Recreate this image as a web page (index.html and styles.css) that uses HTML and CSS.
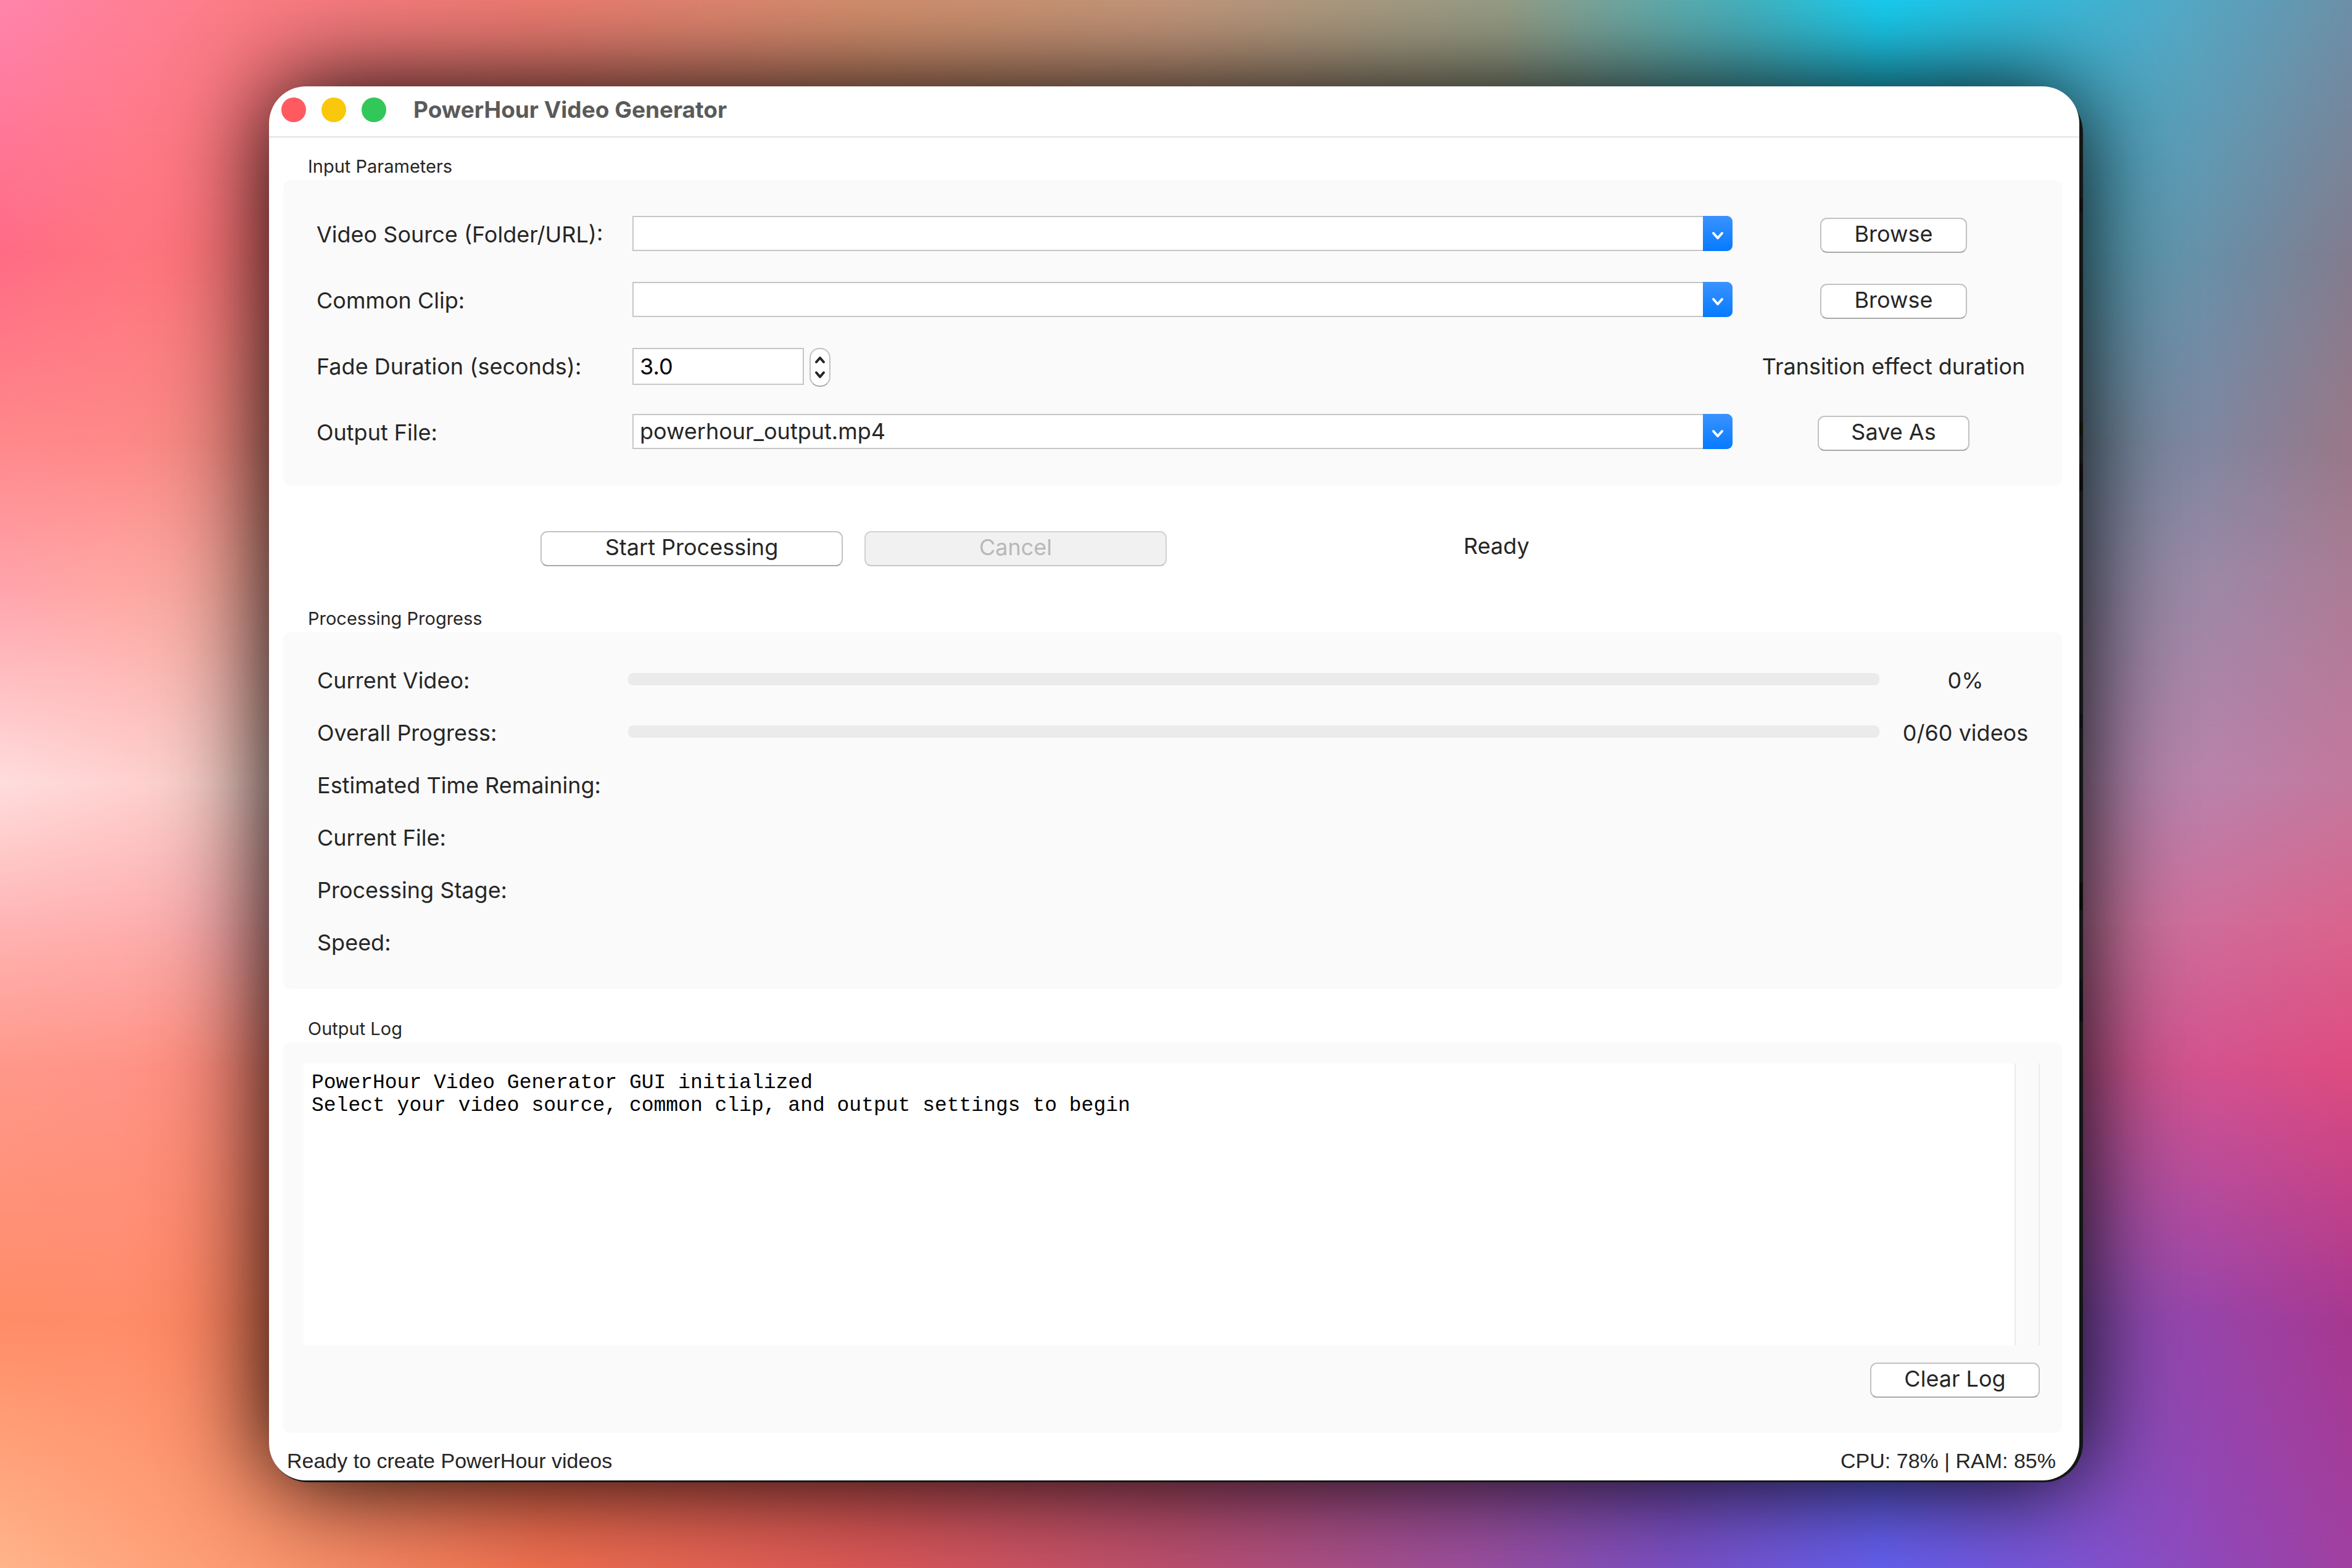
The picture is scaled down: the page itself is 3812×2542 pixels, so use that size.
FILE: index.html
```html
<!DOCTYPE html>
<html lang="en">
<head>
<meta charset="utf-8">
<title>PowerHour Video Generator</title>
<link rel="stylesheet" href="styles.css">
</head>
<body>
<div class="wallpaper" aria-hidden="true">
  <div class="band band-1"></div>
  <div class="band band-2"></div>
  <div class="band band-3"></div>
  <div class="band band-4"></div>
  <div class="band band-5"></div>
  <div class="band band-6"></div>
  <div class="band band-7"></div>
  <div class="band band-8"></div>
  <div class="band band-9"></div>
</div>
<div class="desktop">
  <div class="back-window">
    <main class="window">
      <header class="titlebar">
        <div class="lights">
          <button class="light light-close" type="button" aria-label="Close"></button>
          <button class="light light-minimize" type="button" aria-label="Minimize"></button>
          <button class="light light-zoom" type="button" aria-label="Zoom"></button>
        </div>
        <h1 class="window-title">PowerHour Video Generator</h1>
      </header>

      <div class="content">
        <section class="group">
          <h2 class="group-title">Input Parameters</h2>
          <div class="panel inputs">
            <label for="source">Video Source (Folder/URL):</label>
            <div class="combo">
              <input id="source" class="field" type="text">
              <button class="combo-arrow" type="button" aria-label="Show video sources"><svg viewBox="0 0 20 14"><path d="M3 3l7 8 7-8"/></svg></button>
            </div>
            <button class="button browse" type="button">Browse</button>

            <label for="clip">Common Clip:</label>
            <div class="combo">
              <input id="clip" class="field" type="text">
              <button class="combo-arrow" type="button" aria-label="Show common clips"><svg viewBox="0 0 20 14"><path d="M3 3l7 8 7-8"/></svg></button>
            </div>
            <button class="button browse" type="button">Browse</button>

            <label for="fade">Fade Duration (seconds):</label>
            <div class="spin">
              <input id="fade" class="field spin-field" type="text" inputmode="decimal" value="3.0">
              <div class="stepper">
                <button class="step" type="button" aria-label="Increase"><svg viewBox="0 0 20 14"><path d="M4 11l6-7 6 7"/></svg></button>
                <button class="step" type="button" aria-label="Decrease"><svg viewBox="0 0 20 14"><path d="M4 3l6 7 6-7"/></svg></button>
              </div>
            </div>
            <span class="hint">Transition effect duration</span>

            <label for="output">Output File:</label>
            <div class="combo">
              <input id="output" class="field" type="text" value="powerhour_output.mp4">
              <button class="combo-arrow" type="button" aria-label="Show output files"><svg viewBox="0 0 20 14"><path d="M3 3l7 8 7-8"/></svg></button>
            </div>
            <button class="button save" type="button">Save As</button>
          </div>
        </section>

        <div class="controls">
          <button class="button action" type="button">Start Processing</button>
          <button class="button action" type="button" disabled>Cancel</button>
          <span class="state">Ready</span>
        </div>

        <section class="group">
          <h2 class="group-title">Processing Progress</h2>
          <div class="panel progress">
            <label for="current">Current Video:</label>
            <progress id="current" class="bar" value="0" max="100"></progress>
            <span class="amount">0%</span>
            <label for="overall">Overall Progress:</label>
            <progress id="overall" class="bar" value="0" max="60"></progress>
            <span class="amount">0/60 videos</span>
            <span class="wide">Estimated Time Remaining:</span>
            <span class="wide">Current File:</span>
            <span class="wide">Processing Stage:</span>
            <span class="wide">Speed:</span>
          </div>
        </section>

        <section class="group group-log">
          <h2 class="group-title" id="log-title">Output Log</h2>
          <div class="panel log-panel">
            <div class="log-row">
              <textarea class="log" readonly aria-labelledby="log-title">PowerHour Video Generator GUI initialized
Select your video source, common clip, and output settings to begin</textarea>
              <div class="track"></div>
            </div>
            <button class="button clear" type="button">Clear Log</button>
          </div>
        </section>
      </div>

      <footer class="statusbar">
        <span>Ready to create PowerHour videos</span>
        <span>CPU: 78% | RAM: 85%</span>
      </footer>
    </main>
  </div>
</div>
</body>
</html>
```
FILE: styles.css
```css
* {
  box-sizing: border-box;
}

body {
  margin: 0;
  color: #262626;
  font-family: Inter, "Liberation Sans", sans-serif;
  font-size: 36px;
  line-height: 45px;
}

button,
input,
textarea {
  margin: 0;
  font: inherit;
  color: inherit;
}

/* Wallpaper: horizontal colour bands, each fading in over the one above it */
.wallpaper {
  position: absolute;
  inset: 0;
  overflow: hidden;
}

.band {
  position: absolute;
  inset: 0;
}

.band-1 {
  background: linear-gradient(90deg, #ff85ad 0%, #ff8098 5%, #fb7c84 11%, #ee7c72 23%, #d4906e 37%, #c4987c 50%, #98a088 64%, #48b4c0 74%, #18d0f4 80%, #3cb8d8 88%, #58a4c0 94%, #6c90a8 100%);
}

.band-2 {
  background: linear-gradient(90deg, #ff6b85 0%, #ff7480 5%, #f87474 11%, #e88070 23%, #d4906e 37%, #c4987c 50%, #98a088 64%, #58acb8 74%, #38bcd4 80%, #54a6be 88%, #6890a8 94%, #827c8e 100%);
  mask-image: linear-gradient(transparent 0%, #000 16%);
}

.band-3 {
  background: linear-gradient(90deg, #ff888a 0%, #fe8888 5%, #ec887c 11%, #708ca0 88%, #8086a0 94%, #987888 100%);
  mask-image: linear-gradient(transparent 16%, #000 28%);
}

.band-4 {
  background: linear-gradient(90deg, #ffa2aa 0%, #ffa6a2 5%, #f0a496 11%, #8888a4 88%, #9c88a6 94%, #ac7c96 100%);
  mask-image: linear-gradient(transparent 28%, #000 37%);
}

.band-5 {
  background: linear-gradient(90deg, #ffdddd 0%, #ffd2d2 5%, #f0c8c0 11%, #ac84ac 88%, #ba82aa 94%, #c4789e 100%);
  mask-image: linear-gradient(transparent 37%, #000 50%);
}

.band-6 {
  background: linear-gradient(90deg, #ffb4b4 0%, #ffb0b0 5%, #f0a4a4 11%, #c478a0 88%, #d06c9a 94%, #da648c 100%);
  mask-image: linear-gradient(transparent 50%, #000 59%);
}

.band-7 {
  background: linear-gradient(90deg, #ff988a 0%, #ff9488 5%, #f88674 11%, #c25890 88%, #d4528e 94%, #de4c80 100%);
  mask-image: linear-gradient(transparent 59%, #000 68%);
}

.band-8 {
  background: linear-gradient(90deg, #ff8c68 0%, #ff8c6a 5%, #f8805c 11%, #ee6450 23%, #dc5858 37%, #bc5070 50%, #9c50a0 63%, #7c50c0 71%, #645ce0 80%, #8850b8 88%, #9844a8 94%, #a83890 100%);
  mask-image: linear-gradient(transparent 68%, #000 84%);
}

.band-9 {
  background: linear-gradient(90deg, #ffb48a 0%, #ffa67e 5%, #fa9870 11%, #f07050 23%, #dc5858 37%, #bc5070 50%, #9c50a0 63%, #7c50c4 71%, #6460f0 80%, #7e54d4 88%, #9048b8 94%, #a040a0 100%);
  mask-image: linear-gradient(transparent 84%, #000 100%);
}

.desktop {
  position: relative;
  display: flex;
  min-height: 100vh;
  padding: 140px 436px;
}

/* Dark editor window that shows as a thin rim behind the dialog */
.back-window {
  flex: 1;
  padding: 0 6px 3px 0;
  border-radius: 64px 76px 64px 64px;
  background:
    linear-gradient(transparent 8%, #6b5048 8%, #6b5048 9%, transparent 9%, transparent 24%, #6b6020 24%, #6b6020 25%, transparent 25%, transparent 27%, #6b4a3c 27%, #4a3a34 29%, transparent 29%, transparent 45%, #4a6470 45%, #4a6470 46%, transparent 46%, transparent 57%, #5c4840 57%, #3c3634 59%, transparent 59%, transparent 64%, #4a6470 64%, #3a464c 67%, transparent 67%) right / 6px 100% no-repeat,
    #151717;
  background-blend-mode: soft-light;
  box-shadow: 0 0 160px #000;
}

.window {
  display: flex;
  flex-direction: column;
  border-radius: 60px;
  background: #fff;
  overflow: hidden;
}

.titlebar {
  display: flex;
  align-items: center;
  gap: 44px;
  height: 83px;
  padding: 0 20px 6px;
  border-bottom: 2px solid #e2e2e2;
}

.lights {
  display: flex;
  gap: 25px;
}

.light {
  width: 40px;
  height: 40px;
  padding: 0;
  border: 0;
  border-radius: 50%;
}

.light-close {
  background: #ff5a5f;
}

.light-minimize {
  background: #fac80a;
}

.light-zoom {
  background: #32c759;
}

.window-title {
  margin: 0;
  color: #5a5a5a;
  font-size: 37px;
  font-weight: 700;
}

.content {
  padding: 29px 28px 0 23px;
}

.group-title {
  margin: 0 0 4px 40px;
  font-size: 29px;
  font-weight: 400;
  line-height: 36px;
}

.panel {
  border-radius: 12px;
  background: #fafafa;
}

.inputs {
  display: grid;
  grid-template-columns: 467px 1fr 432px;
  grid-auto-rows: 60px;
  gap: 47px 45px;
  align-items: center;
  padding: 58px 57px 56px 54px;
  white-space: nowrap;
}

.inputs label {
  width: 468px;
}

.combo {
  display: flex;
  align-self: start;
  height: 57px;
}

.field {
  flex: 1;
  min-width: 0;
  padding: 0 10px;
  border: 2px solid #c6c6c6;
  border-radius: 0;
  background: #fff;
  outline: 0;
}

.combo-arrow {
  display: flex;
  align-items: center;
  justify-content: center;
  width: 48px;
  padding: 6px 0 0;
  border: 0;
  border-radius: 0 9px 9px 0;
  background: linear-gradient(#3a93ff, #067aff);
}

.combo .field {
  border-right: 0;
}

.combo-arrow svg {
  width: 20px;
  height: 14px;
  fill: none;
  stroke: #fff;
  stroke-width: 4;
  stroke-linecap: round;
  stroke-linejoin: round;
}

.spin {
  display: flex;
  gap: 9px;
  align-self: start;
}

.spin-field {
  flex: none;
  width: 278px;
  height: 60px;
  color: #000;
}

.stepper {
  display: flex;
  flex-direction: column;
  justify-content: space-between;
  width: 34px;
  height: 63px;
  padding: 10px 0;
  border: 2px solid #c2c2c2;
  border-bottom-color: #aaa;
  border-radius: 16px;
  background: #fff;
}

.step {
  display: flex;
  justify-content: center;
  padding: 0;
  border: 0;
  background: none;
}

.step svg {
  width: 20px;
  height: 14px;
  fill: none;
  stroke: #262626;
  stroke-width: 4;
  stroke-linecap: round;
  stroke-linejoin: round;
}

.button {
  height: 57px;
  padding: 0 0 4px;
  border: 2px solid #c2c2c2;
  border-bottom-color: #a8a8a8;
  border-radius: 11px;
  background: #fff;
}

.button:disabled {
  border-color: #d2d2d2;
  border-bottom-color: #c6c6c6;
  background: #f1f1f1;
  color: #b8b8b8;
}

.browse {
  align-self: end;
  justify-self: center;
  width: 238px;
}

.save {
  align-self: end;
  justify-self: center;
  width: 246px;
}

.hint {
  justify-self: center;
}

.controls {
  display: flex;
  align-items: center;
  gap: 35px;
  margin: 74px 0 67px;
  padding-left: 417px;
}

.action {
  width: 490px;
}

.state {
  margin: 0 0 8px 446px;
}

.progress {
  display: grid;
  grid-template-columns: 465px 1fr 201px;
  gap: 40px 39px;
  align-items: center;
  padding: 56px 56px 52px 55px;
  white-space: nowrap;
}

.bar {
  appearance: none;
  align-self: start;
  width: 100%;
  height: 20px;
  margin-top: 10px;
  border: 0;
  border-radius: 8px;
  background: #ebebeb;
  overflow: hidden;
}

.bar::-webkit-progress-bar {
  background: #ebebeb;
}

.amount {
  justify-self: center;
}

.wide {
  grid-column: 1 / -1;
}

.group-log {
  margin-top: 47px;
}

.log-panel {
  display: flex;
  flex-direction: column;
  padding: 34px 36px 57px 33px;
}

.log-row {
  display: flex;
  height: 457px;
}

.log {
  flex: 1;
  padding: 13px;
  border: 0;
  outline: 0;
  background: #fff;
  color: #000;
  font-family: "Liberation Mono", monospace;
  font-size: 33px;
  line-height: 37px;
  resize: none;
}

.track {
  width: 41px;
  border: solid #ebebeb;
  border-width: 0 2px;
}

.clear {
  align-self: end;
  width: 275px;
  margin-top: 28px;
}

.statusbar {
  display: flex;
  justify-content: space-between;
  padding: 25px 38px 12px 29px;
  font-family: "Liberation Sans", sans-serif;
  font-size: 34px;
  line-height: 40px;
}
```
